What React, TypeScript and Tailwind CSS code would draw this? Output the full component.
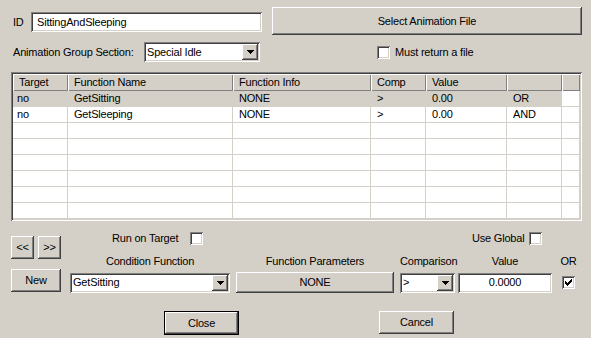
import React from "react";

const raised =
  "bg-[#d4d0c8] shadow-[inset_-1px_-1px_0_#404040,inset_1px_1px_0_#ffffff,inset_-2px_-2px_0_#808080,inset_2px_2px_0_#d4d0c8]";
const sunken =
  "shadow-[inset_1px_1px_0_#808080,inset_-1px_-1px_0_#ffffff,inset_2px_2px_0_#404040,inset_-2px_-2px_0_#d4d0c8]";

const Btn: React.FC<{ className?: string; children?: React.ReactNode }> = ({
  className = "",
  children,
}) => (
  <div className={`${raised} flex items-center justify-center ${className}`}>
    {children}
  </div>
);

const DropArrow = () => (
  <div className={`${raised} w-[16px] h-[16px] flex items-center justify-center shrink-0`}>
    <svg width="7" height="4" viewBox="0 0 7 4" shapeRendering="crispEdges">
      <path d="M0 0h7v1H0zM1 1h5v1H1zM2 2h3v1H2zM3 3h1v1H3z" fill="#000" />
    </svg>
  </div>
);

const Combo: React.FC<{ value: string; className?: string }> = ({
  value,
  className = "",
}) => (
  <div className={`${sunken} bg-white flex items-center p-[2px] ${className}`}>
    <span className="flex-1 pl-[1px] whitespace-nowrap overflow-hidden">{value}</span>
    <DropArrow />
  </div>
);

const Check: React.FC<{ checked?: boolean }> = ({ checked }) => (
  <div className={`${sunken} bg-white w-[13px] h-[13px] flex items-center justify-center shrink-0`}>
    {checked && (
      <svg width="7" height="7" viewBox="0 0 7 7" shapeRendering="crispEdges">
        <path
          d="M0 2h1v3H0zM1 3h1v3H1zM2 4h1v3H2zM3 3h1v3H3zM4 2h1v3H4zM5 1h1v3H5zM6 0h1v3H6z"
          fill="#000"
        />
      </svg>
    )}
  </div>
);

// column widths of the conditions grid
const cols = [
  { name: "Target", w: "w-[55px]" },
  { name: "Function Name", w: "w-[165px]" },
  { name: "Function Info", w: "w-[138px]" },
  { name: "Comp", w: "w-[55px]" },
  { name: "Value", w: "w-[81px]" },
  { name: "", w: "w-[55px]" },
  { name: "", w: "w-[18px]" },
];

const rows: string[][] = [
  ["no", "GetSitting", "NONE", ">", "0.00", "OR", ""],
  ["no", "GetSleeping", "NONE", ">", "0.00", "AND", ""],
  ...Array.from({ length: 6 }, () => ["", "", "", "", "", "", ""]),
];

export default function App() {
  return (
    <div className="w-[591px] h-[338px] overflow-hidden bg-[#d4d0c8] text-black text-[11px] leading-none tracking-[-0.2px] [font-family:'Liberation_Sans',Arial,sans-serif]">
      {/* ID + select file */}
      <div className="flex items-start pt-[7px]">
        <span className="ml-[13px] w-[18px] h-[20px] mt-[5px] flex items-center">ID</span>
        <div className={`${sunken} bg-white w-[231px] h-[20px] mt-[5px] flex items-center pl-[6px]`}>
          SittingAndSleeping
        </div>
        <Btn className="ml-[10px] w-[310px] h-[28px]">Select Animation File</Btn>
      </div>

      {/* group section */}
      <div className="flex items-center h-[20px] mt-[7px]">
        <span className="ml-[13px] w-[131px] whitespace-nowrap">Animation Group Section:</span>
        <Combo value="Special Idle" className="w-[116px] h-[20px]" />
        <div className="ml-[117px] flex items-center gap-[5px]">
          <Check />
          <span>Must return a file</span>
        </div>
      </div>

      {/* conditions grid */}
      <div className={`${sunken} mt-[10px] ml-[11px] w-[571px] h-[149px] bg-white p-[2px]`}>
        <div className="h-full overflow-hidden">
          <div className="flex">
            {cols.map((c, i) => (
              <div
                key={i}
                className={`${c.w} h-[17px] bg-[#d4d0c8] shadow-[inset_1px_1px_0_#ffffff,inset_-1px_-1px_0_#808080] flex items-center pl-[6px] whitespace-nowrap`}
              >
                {c.name}
              </div>
            ))}
          </div>
          {rows.map((r, ri) => (
            <div key={ri} className="flex">
              {r.map((v, ci) => (
                <div
                  key={ci}
                  className={`${cols[ci].w} h-[16px] border-r border-b border-[#d4d0c8] flex items-center whitespace-nowrap ${
                    ci === 0 ? "pl-[4px]" : "pl-[6px]"
                  } ${ri === 0 && ci < 6 ? "bg-[#d4d0c8]" : "bg-white"}`}
                >
                  {v}
                </div>
              ))}
            </div>
          ))}
        </div>
      </div>

      {/* condition editor */}
      <div className="flex">
        <div className="ml-[11px] w-[50px] pt-[15px]">
          <div className="flex gap-[4px]">
            <Btn className="w-[23px] h-[23px]">&lt;&lt;</Btn>
            <Btn className="w-[23px] h-[23px]">&gt;&gt;</Btn>
          </div>
          <Btn className="mt-[10px] w-[50px] h-[23px]">New</Btn>
        </div>

        <div className="ml-[9px] pt-[11px]">
          <div className="flex items-center h-[13px]">
            <span className="ml-[42px] w-[78px] whitespace-nowrap">Run on Target</span>
            <Check />
            <span className="ml-[269px] w-[57px] whitespace-nowrap">Use Global</span>
            <Check />
          </div>

          <div className="flex items-center h-[14px] mt-[9px] whitespace-nowrap">
            <span className="w-[160px] text-center">Condition Function</span>
            <span className="ml-[6px] w-[158px] text-center">Function Parameters</span>
            <span className="ml-[6px] w-[55px] text-center">Comparison</span>
            <span className="ml-[3px] w-[94px] text-center">Value</span>
            <span className="ml-[10px] w-[13px] flex justify-center">OR</span>
          </div>

          <div className="flex items-center h-[21px] mt-[4px]">
            <Combo value="GetSitting" className="w-[160px] h-[20px]" />
            <Btn className="ml-[6px] w-[158px] h-[21px]">NONE</Btn>
            <Combo value=">" className="ml-[6px] w-[55px] h-[20px]" />
            <div className={`${sunken} bg-white ml-[3px] w-[94px] h-[20px] flex items-center justify-center`}>
              0.0000
            </div>
            <div className="ml-[10px]">
              <Check checked />
            </div>
          </div>
        </div>
      </div>

      {/* dialog buttons */}
      <div className="flex mt-[18px]">
        <div className="ml-[164px] w-[75px] h-[24px] border border-black">
          <Btn className="w-full h-full">Close</Btn>
        </div>
        <Btn className="ml-[140px] w-[75px] h-[23px]">Cancel</Btn>
      </div>
    </div>
  );
}
